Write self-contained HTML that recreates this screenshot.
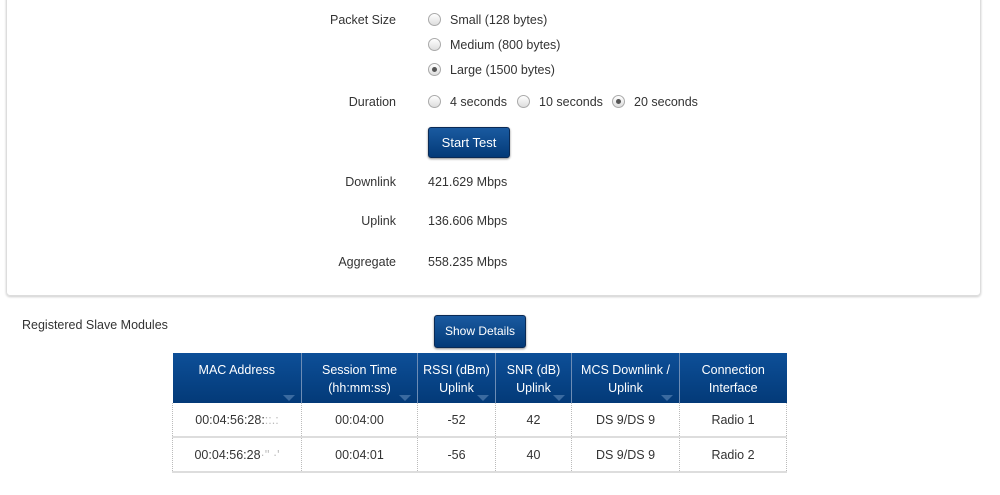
<!DOCTYPE html>
<html><head><style>
body{margin:0;width:1000px;height:495px;background:#fff;font-family:"Liberation Sans",sans-serif;font-size:12.5px;color:#333;position:relative;overflow:hidden}
.abs{position:absolute;white-space:nowrap}
.panel{position:absolute;left:6px;top:-10px;width:973px;height:304px;border:1px solid #ddd;border-radius:4px;box-shadow:0 1px 2px #ccc}
.lbl{position:absolute;text-align:right;width:100px;left:296px}
.radio{display:inline-block;width:11px;height:11px;border:1px solid #aaa;border-radius:50%;background:linear-gradient(#fff,#ddd);vertical-align:-2px;margin-right:9px;position:relative}
.radio.on::after{content:"";position:absolute;left:3px;top:3px;width:5px;height:5px;border-radius:50%;background:#555}
.btn{position:absolute;background:linear-gradient(#1a5aa0,#033a78);color:#fff;border:1px solid #0a2a55;border-radius:3px;text-align:center;box-shadow:0 1px 2px #888}
table{position:absolute;left:172px;top:353px;border-collapse:collapse;font-size:12.5px}
th{background:linear-gradient(#0d4f98,#033a78);color:#fff;font-weight:normal;height:50px;vertical-align:top;padding-top:8px;box-sizing:border-box;line-height:18px;border-left:1px solid #6c8cb5;position:relative}
th .ar{position:absolute;right:6px;bottom:2px;width:0;height:0;border-left:6px solid transparent;border-right:6px solid transparent;border-top:6px solid #3a6aa0}
td{text-align:center;border-left:1px dotted #bbb;border-right:1px dotted #bbb;border-bottom:2px solid #ddd;height:33px;padding:0}
</style></head><body>
<div class="panel"></div>
<div class="lbl" style="top:13px">Packet Size</div>
<div class="abs" style="left:428px;top:13px"><span class="radio"></span>Small (128 bytes)</div>
<div class="abs" style="left:428px;top:38px"><span class="radio"></span>Medium (800 bytes)</div>
<div class="abs" style="left:428px;top:63px"><span class="radio on"></span>Large (1500 bytes)</div>
<div class="lbl" style="top:95px">Duration</div>
<div class="abs" style="left:428px;top:95px"><span class="radio"></span>4 seconds</div>
<div class="abs" style="left:517px;top:95px"><span class="radio"></span>10 seconds</div>
<div class="abs" style="left:612px;top:95px"><span class="radio on"></span>20 seconds</div>
<div class="btn" style="left:428px;top:127px;width:80px;height:29px;line-height:29px;font-size:13px">Start Test</div>
<div class="lbl" style="top:175px">Downlink</div>
<div class="abs" style="left:428px;top:175px">421.629 Mbps</div>
<div class="lbl" style="top:214px">Uplink</div>
<div class="abs" style="left:428px;top:214px">136.606 Mbps</div>
<div class="lbl" style="top:255px">Aggregate</div>
<div class="abs" style="left:428px;top:255px">558.235 Mbps</div>
<div class="abs" style="left:22px;top:318px">Registered Slave Modules</div>
<div class="btn" style="left:434px;top:315px;width:90px;height:31px;line-height:31px;font-size:12px">Show Details</div>
<table>
<tr><th style="width:129px;border-left:none">MAC Address<span class="ar"></span></th><th style="width:116px">Session Time<br>(hh:mm:ss)<span class="ar"></span></th><th style="width:78px">RSSI (dBm)<br>Uplink<span class="ar"></span></th><th style="width:76px">SNR (dB)<br>Uplink<span class="ar"></span></th><th style="width:108px">MCS Downlink /<br>Uplink<span class="ar"></span></th><th style="width:107px">Connection<br>Interface</th></tr>
<tr><td>00:04:56:28:<span style="color:#bbb">::.:</span></td><td>00:04:00</td><td>-52</td><td>42</td><td>DS 9/DS 9</td><td>Radio 1</td></tr>
<tr><td>00:04:56:28<span style="color:#bbb">·''  ·'</span></td><td>00:04:01</td><td>-56</td><td>40</td><td>DS 9/DS 9</td><td>Radio 2</td></tr>
</table>
</body></html>
